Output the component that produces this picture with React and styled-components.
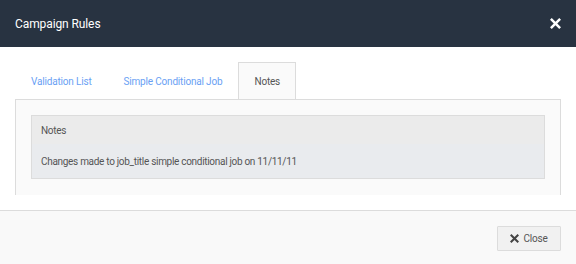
import React from 'react';
import { styled, createGlobalStyle } from 'styled-components';

const Global = createGlobalStyle`
  body {
    margin: 0;
    background: #fff;
    font-family: Roboto, "Liberation Sans", sans-serif;
  }
`;

const TimesIcon = ({ size = 10, color = '#fff' }) => (
  <svg width={size} height={size} viewBox="0 0 10 10">
    <path
      d="M1.6 0 L5 3.4 L8.4 0 L10 1.6 L6.6 5 L10 8.4 L8.4 10 L5 6.6 L1.6 10 L0 8.4 L3.4 5 L0 1.6 Z"
      fill={color}
    />
  </svg>
);

const tabs = ['Validation List', 'Simple Conditional Job', 'Notes'];

const App = () => {
  return (
    <>
      <Global />
      <StModal>
        <StHeader>
          <StTitle>Campaign Rules</StTitle>
          <StIconButton>
            <TimesIcon size={11} />
          </StIconButton>
        </StHeader>

        <StBody>
          <StTabs>
            {tabs.map((t) => (
              <StTab key={t} $active={t === 'Notes'}>
                {t}
              </StTab>
            ))}
          </StTabs>
          <StPanel>
            <StNoteBox>
              <StNoteHead>Notes</StNoteHead>
              <StNoteText>Changes made to job_title simple conditional job on 11/11/11</StNoteText>
            </StNoteBox>
          </StPanel>
        </StBody>

        <StFooter>
          <StButton>
            <TimesIcon size={9} color="#444" />
            Close
          </StButton>
        </StFooter>
      </StModal>
    </>
  );
};

export default App;

const StModal = styled.div`
  width: 576px;
  height: 264px;
  display: flex;
  flex-direction: column;
  overflow: hidden;
`;

const StHeader = styled.div`
  height: 47px;
  flex-shrink: 0;
  display: flex;
  align-items: center;
  justify-content: space-between;
  padding: 0 15px;
  background-color: #283341;
`;

const StTitle = styled.h4`
  margin: 0;
  color: #fff;
  font-size: 12px;
  letter-spacing: -0.1px;
  font-weight: 400;
`;

const StIconButton = styled.span`
  display: flex;
  cursor: pointer;
`;

const StBody = styled.div`
  padding: 15px;
`;

const StTabs = styled.ul`
  display: flex;
  margin: 0;
  padding: 0;
  list-style: none;
`;

const StTab = styled.li`
  height: 37px;
  box-sizing: border-box;
  display: flex;
  align-items: center;
  padding: 0 15px;
  border: 1px solid ${(p) => (p.$active ? '#dcdcdc' : 'transparent')};
  border-bottom: none;
  margin-bottom: ${(p) => (p.$active ? '-1px' : '0')};
  background: ${(p) => (p.$active ? '#fafafa' : 'transparent')};
  color: ${(p) => (p.$active ? '#555' : '#6a9ff4')};
  font-size: 10px;
  letter-spacing: -0.18px;
  position: relative;
  z-index: 1;
  cursor: pointer;
`;

const StPanel = styled.div`
  height: 96px;
  box-sizing: border-box;
  padding: 15px;
  border: 1px solid #dcdcdc;
  border-bottom: none;
  background: #fafafa;
`;

const StNoteBox = styled.div`
  border: 1px solid #dcdcdc;
  background: #e9ebee;
`;

const StNoteHead = styled.div`
  height: 28px;
  display: flex;
  align-items: center;
  padding: 0 9px;
  background: #ebebeb;
  color: #555;
  font-size: 10px;
  letter-spacing: -0.3px;
`;

const StNoteText = styled.div`
  height: 34px;
  display: flex;
  align-items: center;
  padding: 0 9px;
  color: #555;
  font-size: 10px;
  letter-spacing: -0.3px;
`;

const StFooter = styled.div`
  flex: 1;
  display: flex;
  justify-content: flex-end;
  align-items: flex-start;
  padding: 15px;
  border-top: 1px solid #dcdcdc;
  background: #f9f9f9;
`;

const StButton = styled.button`
  height: 25px;
  width: 64px;
  display: flex;
  align-items: center;
  justify-content: center;
  gap: 4px;
  padding: 0;
  background: #f1f1f1;
  border: 1px solid #dcdcdc;
  border-radius: 1px;
  color: #555;
  font-family: inherit;
  font-size: 10px;
  letter-spacing: -0.2px;
  cursor: pointer;
`;
